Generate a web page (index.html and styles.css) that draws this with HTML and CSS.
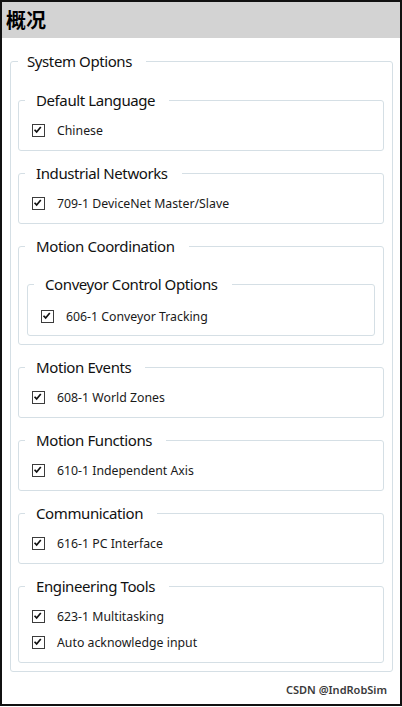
FILE: index.html
```html
<!DOCTYPE html>
<html lang="zh">
<head>
<meta charset="utf-8">
<title>概况</title>
<link rel="stylesheet" href="styles.css">
</head>
<body>
<div class="frame">
  <div class="header">概况</div>
  <fieldset class="group outer">
    <legend>System Options</legend>

    <fieldset class="group">
      <legend>Default Language</legend>
      <div class="rows">
        <div class="row"><span class="cb"><svg viewBox="0 0 13 13"><path d="M2.8 6.6 L5.3 9.2 L10.2 3.4"/></svg></span><span class="lbl">Chinese</span></div>
      </div>
    </fieldset>

    <fieldset class="group">
      <legend>Industrial Networks</legend>
      <div class="rows">
        <div class="row"><span class="cb"><svg viewBox="0 0 13 13"><path d="M2.8 6.6 L5.3 9.2 L10.2 3.4"/></svg></span><span class="lbl">709-1 DeviceNet Master/Slave</span></div>
      </div>
    </fieldset>

    <fieldset class="group coord">
      <legend>Motion Coordination</legend>
      <fieldset class="group nested">
        <legend>Conveyor Control Options</legend>
        <div class="rows">
          <div class="row"><span class="cb"><svg viewBox="0 0 13 13"><path d="M2.8 6.6 L5.3 9.2 L10.2 3.4"/></svg></span><span class="lbl">606-1 Conveyor Tracking</span></div>
        </div>
      </fieldset>
    </fieldset>

    <fieldset class="group">
      <legend>Motion Events</legend>
      <div class="rows">
        <div class="row"><span class="cb"><svg viewBox="0 0 13 13"><path d="M2.8 6.6 L5.3 9.2 L10.2 3.4"/></svg></span><span class="lbl">608-1 World Zones</span></div>
      </div>
    </fieldset>

    <fieldset class="group">
      <legend>Motion Functions</legend>
      <div class="rows">
        <div class="row"><span class="cb"><svg viewBox="0 0 13 13"><path d="M2.8 6.6 L5.3 9.2 L10.2 3.4"/></svg></span><span class="lbl">610-1 Independent Axis</span></div>
      </div>
    </fieldset>

    <fieldset class="group comm">
      <legend>Communication</legend>
      <div class="rows">
        <div class="row"><span class="cb"><svg viewBox="0 0 13 13"><path d="M2.8 6.6 L5.3 9.2 L10.2 3.4"/></svg></span><span class="lbl">616-1 PC Interface</span></div>
      </div>
    </fieldset>

    <fieldset class="group last">
      <legend>Engineering Tools</legend>
      <div class="rows">
        <div class="row"><span class="cb"><svg viewBox="0 0 13 13"><path d="M2.8 6.6 L5.3 9.2 L10.2 3.4"/></svg></span><span class="lbl">623-1 Multitasking</span></div>
        <div class="row"><span class="cb"><svg viewBox="0 0 13 13"><path d="M2.8 6.6 L5.3 9.2 L10.2 3.4"/></svg></span><span class="lbl">Auto acknowledge input</span></div>
      </div>
    </fieldset>
  </fieldset>
  <div class="footer">CSDN @IndRobSim</div>
</div>
</body>
</html>
```

FILE: styles.css
```css
* { box-sizing: border-box; }
html, body {
  margin: 0;
  padding: 0;
  background: #ffffff;
}
body {
  font-family: "Noto Sans", "Open Sans", "Liberation Sans", sans-serif;
  color: #1b1b1b;
}
.frame {
  width: 402px;
  height: 706px;
  border: 2px solid #111111;
  display: flex;
  flex-direction: column;
  background: #ffffff;
}
.header {
  height: 36px;
  background: #d3d3d3;
  font-family: "Noto Sans CJK SC", "Noto Sans", sans-serif;
  font-weight: 700;
  font-size: 20px;
  line-height: 36px;
  padding-left: 4px;
  color: #000000;
}
.group {
  border: 1px solid #d5dfe5;
  border-radius: 3px;
  margin: 0 0 11px 0;
  padding: 9px 8px 10px 6px;
  min-width: 0;
}
.group > legend {
  font-size: 15px;
  letter-spacing: -0.4px;
  line-height: 22px;
  height: 22px;
  padding: 0 14px 0 11px;
  color: #111111;
  white-space: nowrap;
}
.outer {
  margin: 12px 7px 0 8px;
  padding: 17px 8px 8px 7px;
}
.outer > legend {
  padding: 0 14px 0 9px;
}
.last { margin-bottom: 0; }
.coord { padding-bottom: 8px; margin-bottom: 11px; }
.comm { margin-bottom: 11px; }
.nested {
  margin: 7px 0 0 2px;
  padding-top: 11px;
  padding-bottom: 9px;
}
.rows {
  display: flex;
  flex-direction: column;
  gap: 6px;
  padding-left: 7px;
}
.row {
  height: 20px;
  display: flex;
  align-items: center;
  gap: 12px;
}
.cb {
  width: 13px;
  height: 13px;
  border: 1px solid #3c3c3c;
  background: #ffffff;
  display: flex;
  flex: none;
}
.cb svg {
  width: 11px;
  height: 11px;
  display: block;
}
.cb svg path {
  fill: none;
  stroke: #111111;
  stroke-width: 2;
  transform: translate(-1px, -1px);
}
.lbl {
  font-size: 12.3px;
  color: #1a1a1a;
  white-space: nowrap;
}
.footer {
  margin-top: 10px;
  text-align: right;
  padding-right: 13px;
  font-size: 11px;
  line-height: 16px;
  font-weight: 600;
  color: #3a3a3a;
}
```
